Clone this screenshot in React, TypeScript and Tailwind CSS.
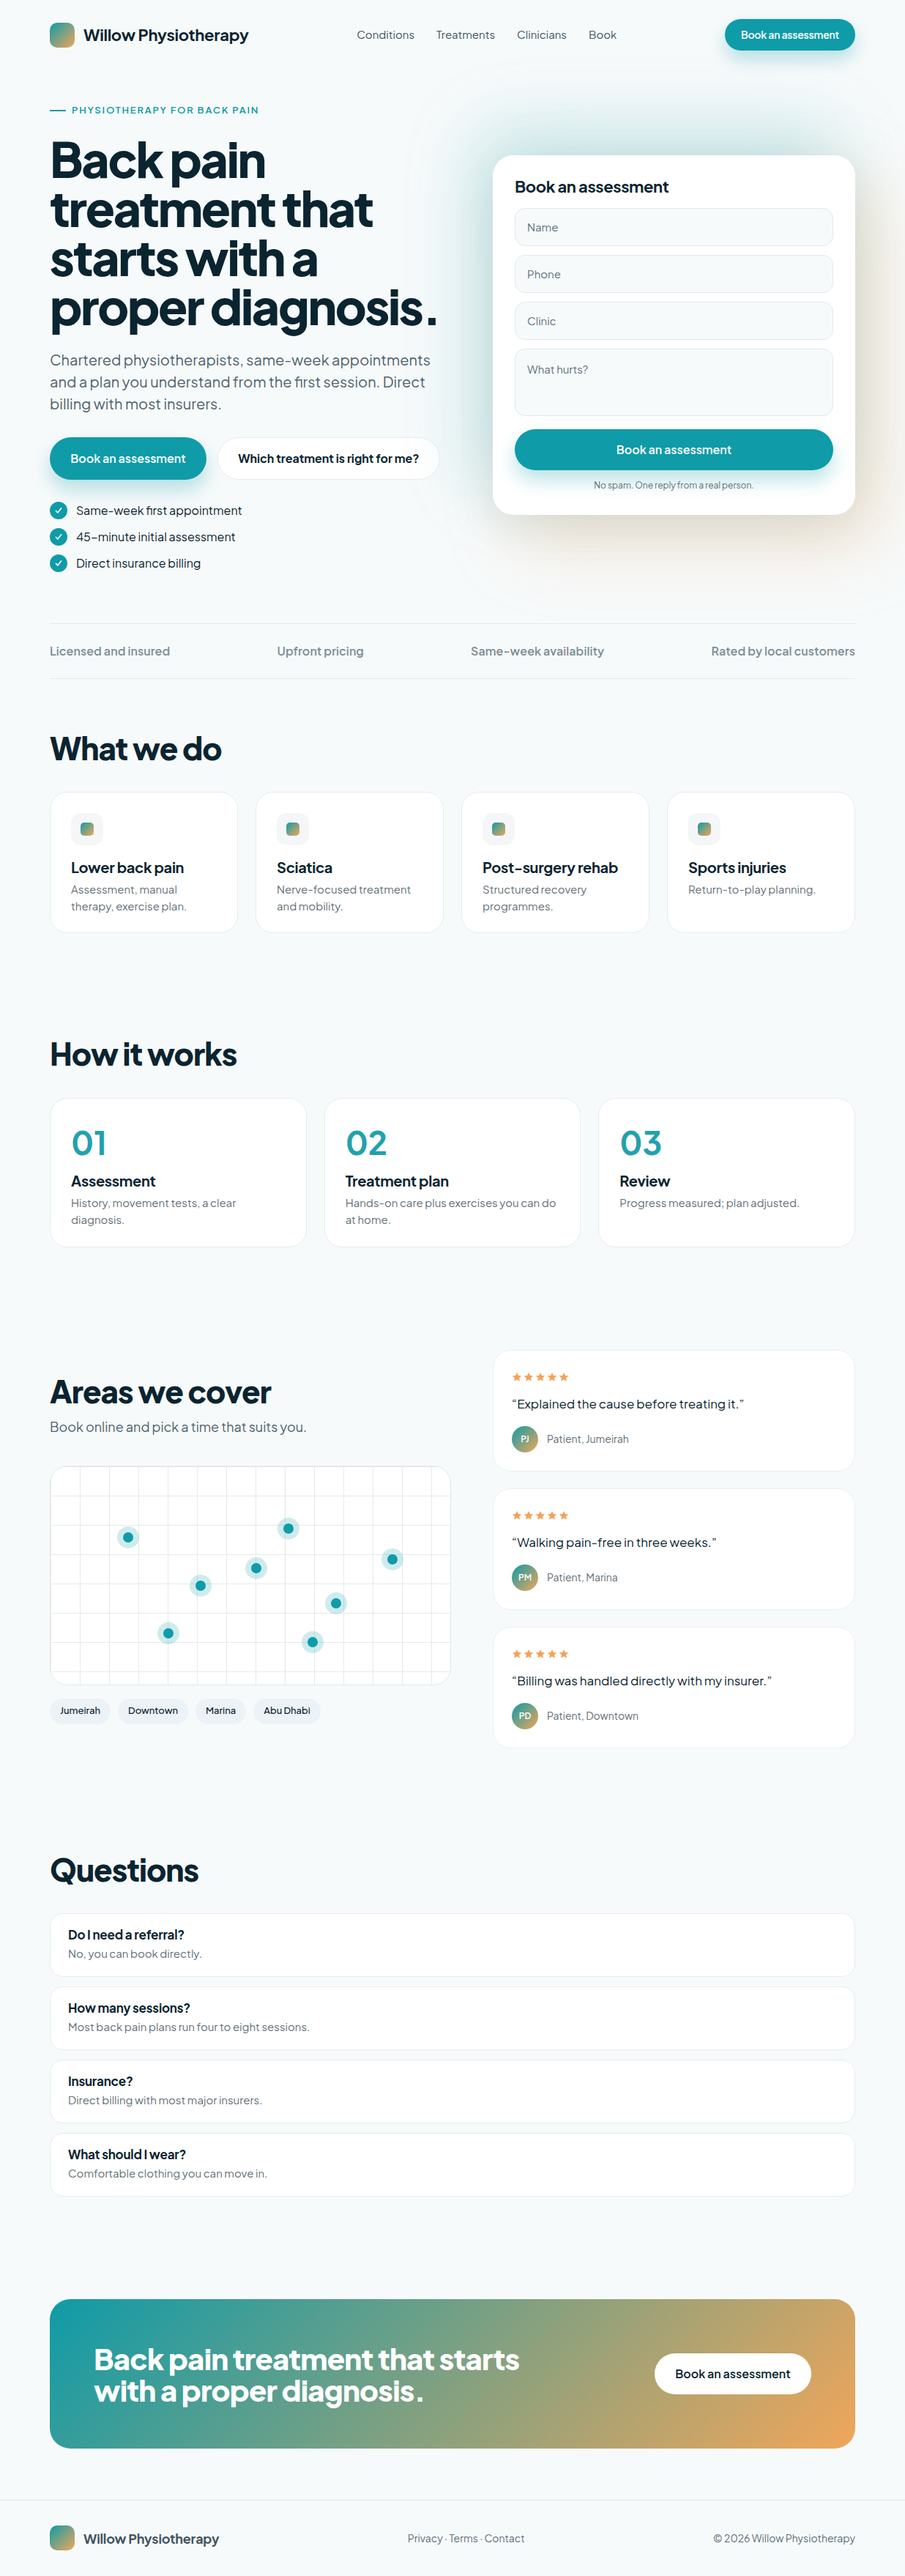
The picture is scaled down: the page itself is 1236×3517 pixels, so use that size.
const font = { fontFamily: '"Plus Jakarta Sans", Inter, "Noto Sans", sans-serif' };

const treatments = [
  { title: "Lower back pain", body: "Assessment, manual therapy, exercise plan." },
  { title: "Sciatica", body: "Nerve-focused treatment and mobility." },
  { title: "Post-surgery rehab", body: "Structured recovery programmes." },
  { title: "Sports injuries", body: "Return-to-play planning." },
];

const steps = [
  { num: "01", title: "Assessment", body: "History, movement tests, a clear diagnosis." },
  { num: "02", title: "Treatment plan", body: "Hands-on care plus exercises you can do at home." },
  { num: "03", title: "Review", body: "Progress measured; plan adjusted." },
];

const pins = [
  [106, 97], [325, 85], [467, 127], [281, 139], [205, 163], [390, 187], [161, 228], [358, 240],
];

const reviews = [
  { quote: "“Explained the cause before treating it.”", who: "Patient, Jumeirah", initials: "PJ" },
  { quote: "“Walking pain-free in three weeks.”", who: "Patient, Marina", initials: "PM" },
  { quote: "“Billing was handled directly with my insurer.”", who: "Patient, Downtown", initials: "PD" },
];

const faqs = [
  { q: "Do I need a referral?", a: "No, you can book directly." },
  { q: "How many sessions?", a: "Most back pain plans run four to eight sessions." },
  { q: "Insurance?", a: "Direct billing with most major insurers." },
  { q: "What should I wear?", a: "Comfortable clothing you can move in." },
];

const Logo = () => (
  <div className="h-[34px] w-[34px] rounded-[10px] bg-[linear-gradient(135deg,#0f9ba8,#f0a65a)]" />
);

const Field = ({ label, tall }: { label: string; tall?: boolean }) => (
  <div className={`rounded-[14px] border border-[#e2e8ee] bg-[#f7fafb] px-4 text-[15px] text-[#5f7079] ${tall ? "h-[92px] pt-[16px]" : "flex h-[52px] items-center"}`}>
    {label}
  </div>
);

const Check = () => (
  <span className="flex h-6 w-6 items-center justify-center rounded-full bg-[#0f9ba8]">
    <svg width="12" height="12" viewBox="0 0 24 24" fill="none" stroke="white" strokeWidth="3.4" strokeLinecap="round" strokeLinejoin="round">
      <path d="M5 13l4.5 5L19 6" />
    </svg>
  </span>
);

const Star = () => (
  <svg width="14" height="14" viewBox="0 0 24 24" fill="#f4a259">
    <path d="M12 1.5l3.2 7 7.6.8-5.7 5.1 1.6 7.5L12 18.1l-6.7 3.8 1.6-7.5L1.2 9.3l7.6-.8z" />
  </svg>
);

export default function App() {
  return (
    <div style={font} className="min-h-[3517px] bg-[#f7fafb] text-[#0a2430]">
      <div className="mx-auto w-[1100px]">
        <header className="flex h-[95px] items-center justify-between">
          <div className="flex items-center gap-[12px] text-[22px] font-bold tracking-[-0.3px]">
            <Logo />
            Willow Physiotherapy
          </div>
          <nav className="flex gap-[30px] text-[15px] text-[#41545e]">
            <span>Conditions</span>
            <span>Treatments</span>
            <span>Clinicians</span>
            <span>Book</span>
          </nav>
          <button className="h-[43px] w-[178px] rounded-full bg-[#0f9ba8] text-[14px] font-semibold tracking-[-0.2px] text-white shadow-[0_12px_24px_rgba(15,155,168,0.28)]">
            Book an assessment
          </button>
        </header>

        <section className="grid grid-cols-[1fr_495px] gap-[40px]">
          <div>
            <div className="mt-[46px] flex items-center gap-[8px] text-[13px] font-semibold tracking-[1.8px] text-[#0f9ba8]">
              <span className="h-[2px] w-[22px] bg-[#0f9ba8]" />
              PHYSIOTHERAPY FOR BACK PAIN
            </div>
            <h1 className="mt-[22px] text-[66px] font-extrabold leading-[67px] tracking-[-2.3px]">
              Back pain treatment that starts with a proper diagnosis.
            </h1>
            <p className="mt-[25px] max-w-[540px] text-[20px] leading-[30px] text-[#4f626c]">
              Chartered physiotherapists, same-week appointments and a plan you understand from the first session. Direct billing with most insurers.
            </p>
            <div className="mt-[31px] flex gap-[15px]">
              <button className="h-[58px] w-[214px] rounded-full bg-[#0f9ba8] text-[16px] font-semibold text-white shadow-[0_14px_26px_rgba(15,155,168,0.28)]">
                Book an assessment
              </button>
              <button className="h-[58px] w-[304px] rounded-full border border-[#e6ecef] bg-white text-[16px] font-bold">
                Which treatment is right for me?
              </button>
            </div>
            <ul className="mt-[30px] flex flex-col gap-[12px] text-[16px]">
              {["Same-week first appointment", "45-minute initial assessment", "Direct insurance billing"].map((item) => (
                <li key={item} className="flex items-center gap-[12px]">
                  <Check />
                  {item}
                </li>
              ))}
            </ul>
          </div>
          <div className="mt-[117px] h-[491px] rounded-[28px] bg-white px-[30px] pt-[26px] shadow-[-24px_-34px_100px_rgba(15,155,168,0.22),34px_40px_100px_rgba(232,165,92,0.26),0_20px_60px_rgba(10,36,48,0.06)]">
            <h3 className="text-[22px] font-bold leading-[32px] tracking-[-0.4px]">Book an assessment</h3>
            <div className="mt-[14px] flex flex-col gap-[12px]">
              <Field label="Name" />
              <Field label="Phone" />
              <Field label="Clinic" />
              <Field label="What hurts?" tall />
            </div>
            <button className="mt-[18px] h-[56px] w-full rounded-full bg-[#0f9ba8] text-[16px] font-semibold text-white shadow-[0_14px_26px_rgba(15,155,168,0.28)]">
              Book an assessment
            </button>
            <p className="mt-[12px] text-center text-[12px] text-[#5f7079]">No spam. One reply from a real person.</p>
          </div>
        </section>

        <div className="mt-[70px] flex h-[76px] items-center justify-between border-y border-[#e2e8ee] text-[16px] font-semibold tracking-[0.1px] text-[#7d8d95]">
          <span>Licensed and insured</span>
          <span>Upfront pricing</span>
          <span>Same-week availability</span>
          <span>Rated by local customers</span>
        </div>

        <section className="mt-[66px]">
          <h2 className="text-[42px] font-extrabold leading-[56px] tracking-[-1px]">What we do</h2>
          <div className="mt-[32px] grid grid-cols-4 gap-[24px]">
            {treatments.map((t) => (
              <div key={t.title} className="h-[193px] rounded-[24px] border border-[#e6ecef] bg-white px-[28px] pt-[28px]">
                <div className="flex h-[44px] w-[44px] items-center justify-center rounded-[14px] bg-[#f5f6f7]">
                  <div className="h-[18px] w-[18px] rounded-[5px] bg-[linear-gradient(135deg,#0f9ba8,#f0a65a)]" />
                </div>
                <h3 className="mt-[18px] text-[20px] font-bold leading-[24px] tracking-[-0.3px]">{t.title}</h3>
                <p className="mt-[6px] text-[15px] leading-[23px] text-[#5f7079]">{t.body}</p>
              </div>
            ))}
          </div>
        </section>

        <section className="mt-[136px]">
          <h2 className="text-[42px] font-extrabold leading-[56px] tracking-[-1px]">How it works</h2>
          <div className="mt-[33px] grid grid-cols-3 gap-[24px]">
            {steps.map((s) => (
              <div key={s.num} className="h-[204px] rounded-[24px] border border-[#e6ecef] bg-white px-[28px] pt-[31px]">
                <div className="text-[44px] font-bold leading-[56px] text-[#22a1ad]">{s.num}</div>
                <h3 className="mt-[13px] text-[20px] font-bold leading-[24px] tracking-[-0.3px]">{s.title}</h3>
                <p className="mt-[6px] text-[15px] leading-[23px] text-[#5f7079]">{s.body}</p>
              </div>
            ))}
          </div>
        </section>

        <section className="mt-[140px] grid grid-cols-[548px_495px] justify-between">
          <div className="pt-[28px]">
            <h2 className="text-[42px] font-extrabold leading-[56px] tracking-[-1px]">Areas we cover</h2>
            <p className="mt-[7px] text-[18px] leading-[28px] text-[#4f626c]">Book online and pick a time that suits you.</p>
            <div className="relative mt-[39px] h-[300px] overflow-hidden rounded-[24px] border border-[#e2e8ee] bg-white bg-[linear-gradient(#e6e9ec_1px,transparent_1px),linear-gradient(90deg,#e6e9ec_1px,transparent_1px)] bg-[size:40px_40px]">
              {pins.map(([x, y]) => (
                <span
                  key={x}
                  className="absolute h-[14px] w-[14px] rounded-full bg-[#0f9ba8] shadow-[0_0_0_8px_rgba(15,155,168,0.2)]"
                  style={{ left: x - 7, top: y - 7 }}
                />
              ))}
            </div>
            <div className="mt-[18px] flex gap-[10px] text-[13px] font-medium">
              {["Jumeirah", "Downtown", "Marina", "Abu Dhabi"].map((c) => (
                <span key={c} className="flex h-[35px] items-center rounded-full bg-[#edf2f6] px-[14px]">{c}</span>
              ))}
            </div>
          </div>
          <div className="flex flex-col gap-[23px]">
            {reviews.map((r) => (
              <div key={r.who} className="h-[166px] rounded-[24px] border border-[#eaeff2] bg-white px-[25px] pt-[29px]">
                <div className="flex gap-[2px]"><Star /><Star /><Star /><Star /><Star /></div>
                <p className="mt-[15px] text-[17px] leading-[28px]">{r.quote}</p>
                <div className="mt-[17px] flex items-center gap-[12px]">
                  <div className="flex h-[36px] w-[36px] items-center justify-center rounded-full bg-[linear-gradient(135deg,#0f9ba8,#f0a65a)] text-[12px] font-semibold text-white">{r.initials}</div>
                  <span className="text-[14px] text-[#5f7079]">{r.who}</span>
                </div>
              </div>
            ))}
          </div>
        </section>

        <section className="mt-[137px]">
          <h2 className="text-[42px] font-extrabold leading-[56px] tracking-[-1px]">Questions</h2>
          <div className="mt-[32px] flex flex-col gap-[13px]">
            {faqs.map((f) => (
              <div key={f.q} className="h-[87px] rounded-[18px] border border-[#e6ecef] bg-white px-[24px] pt-[16px]">
                <h3 className="text-[17px] font-bold leading-[24px] tracking-[-0.2px]">{f.q}</h3>
                <p className="mt-[3px] text-[15px] leading-[22px] text-[#5f7079]">{f.a}</p>
              </div>
            ))}
          </div>
        </section>

        <section className="mt-[140px] flex h-[204px] items-center justify-between rounded-[28px] bg-[linear-gradient(135deg,#0f9ba8,#f0a65a)] px-[60px]">
          <h2 className="w-[640px] text-[40px] font-extrabold leading-[43px] tracking-[-0.8px] text-white">
            Back pain treatment that starts with a proper diagnosis.
          </h2>
          <button className="h-[56px] w-[214px] rounded-full bg-white text-[16px] font-semibold">Book an assessment</button>
        </section>
      </div>

      <footer className="mt-[70px] border-t border-[#e2e8ee]">
        <div className="mx-auto flex h-[103px] w-[1100px] items-center justify-between text-[14px] text-[#5f7079]">
          <div className="flex items-center gap-[12px] text-[18px] font-bold tracking-[-0.2px] text-[#41545e]">
            <Logo />
            Willow Physiotherapy
          </div>
          <span>Privacy · Terms · Contact</span>
          <span>© 2026 Willow Physiotherapy</span>
        </div>
      </footer>
    </div>
  );
}
